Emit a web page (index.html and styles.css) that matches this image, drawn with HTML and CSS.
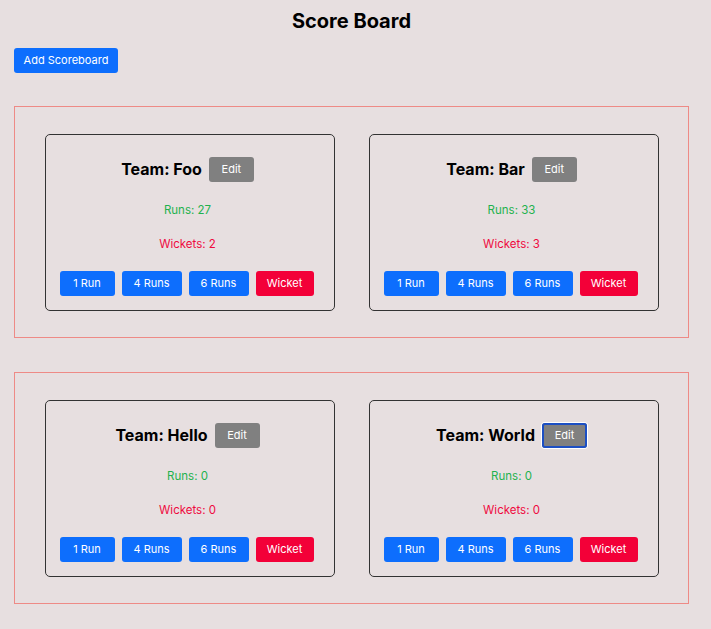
FILE: index.html
```html
<!DOCTYPE html>
<html>
<head>
<meta charset="utf-8">
<link rel="stylesheet" href="styles.css">
</head>
<body>
<h1 class="title">Score Board</h1>
<div class="toolbar"><button class="btn btn-blue add">Add Scoreboard</button></div>

<section class="board">
  <div class="card">
    <div class="card-head"><h2 class="team">Team: Foo</h2><button class="btn btn-gray">Edit</button></div>
    <p class="runs">Runs: 27</p>
    <p class="wickets">Wickets: 2</p>
    <div class="actions">
      <button class="btn btn-blue">1 Run</button><button class="btn btn-blue">4 Runs</button><button class="btn btn-blue">6 Runs</button><button class="btn btn-red">Wicket</button>
    </div>
  </div>
  <div class="card">
    <div class="card-head"><h2 class="team">Team: Bar</h2><button class="btn btn-gray">Edit</button></div>
    <p class="runs">Runs: 33</p>
    <p class="wickets">Wickets: 3</p>
    <div class="actions">
      <button class="btn btn-blue">1 Run</button><button class="btn btn-blue">4 Runs</button><button class="btn btn-blue">6 Runs</button><button class="btn btn-red">Wicket</button>
    </div>
  </div>
</section>

<section class="board">
  <div class="card">
    <div class="card-head"><h2 class="team">Team: Hello</h2><button class="btn btn-gray">Edit</button></div>
    <p class="runs">Runs: 0</p>
    <p class="wickets">Wickets: 0</p>
    <div class="actions">
      <button class="btn btn-blue">1 Run</button><button class="btn btn-blue">4 Runs</button><button class="btn btn-blue">6 Runs</button><button class="btn btn-red">Wicket</button>
    </div>
  </div>
  <div class="card">
    <div class="card-head"><h2 class="team">Team: World</h2><button class="btn btn-gray focused">Edit</button></div>
    <p class="runs">Runs: 0</p>
    <p class="wickets">Wickets: 0</p>
    <div class="actions">
      <button class="btn btn-blue">1 Run</button><button class="btn btn-blue">4 Runs</button><button class="btn btn-blue">6 Runs</button><button class="btn btn-red">Wicket</button>
    </div>
  </div>
</section>
</body>
</html>
```

FILE: styles.css
```css
html, body {
  margin: 0;
  padding: 0;
}
body {
  background: #e7dfe0;
  font-family: Inter, "Liberation Sans", sans-serif;
  color: #000;
  padding: 0 22px 20px 14px;
}
.title {
  margin: 0;
  padding-top: 9px;
  height: 48px;
  box-sizing: border-box;
  text-align: center;
  font-size: 20px;
  line-height: 24px;
  font-weight: 700;
}
.toolbar {
  margin-bottom: 33px;
}
.btn {
  font-family: Inter, "Liberation Sans", sans-serif;
  font-size: 11px;
  height: 25px;
  line-height: 25px;
  border: none;
  border-radius: 3px;
  color: #fff;
  padding: 0 13px;
  cursor: pointer;
  box-sizing: border-box;
}
.add {
  width: 104px;
  padding: 0;
}
.btn-blue { background: #0d6efd; }
.btn-red { background: #f30038; }
.btn-gray { background: #808080; width: 45px; padding: 0; }
.focused {
  box-shadow: 0 0 0 1px #fff, inset 0 0 0 2px #1c4fc4;
}
.board {
  border: 1px solid #ee8a86;
  display: grid;
  grid-template-columns: 290px 290px;
  column-gap: 34px;
  padding: 27px 30px 26px 30px;
  margin-bottom: 34px;
}
.card {
  border: 1px solid #333;
  border-radius: 5px;
  padding: 22px 5px 13px 0;
  text-align: center;
  height: 177px;
  box-sizing: border-box;
}
.card-head {
  display: flex;
  justify-content: center;
  align-items: center;
  gap: 7px;
  height: 25px;
}
.team {
  margin: 0;
  font-size: 16px;
  font-weight: 700;
  line-height: 25px;
}
.runs, .wickets {
  margin: 0;
  font-size: 11.5px;
  line-height: 16px;
}
.runs {
  color: #1fb24e;
  margin-top: 20px;
}
.wickets {
  color: #ef0a3f;
  margin-top: 18px;
}
.actions {
  display: flex;
  justify-content: center;
  gap: 7px;
  margin-top: 19px;
  margin-right: 2px;
}
.actions .btn:nth-child(1) { width: 55px; padding: 0; }
.actions .btn:nth-child(2),
.actions .btn:nth-child(3) { width: 60px; padding: 0; }
.actions .btn:nth-child(4) { width: 58px; padding: 0; }
```
